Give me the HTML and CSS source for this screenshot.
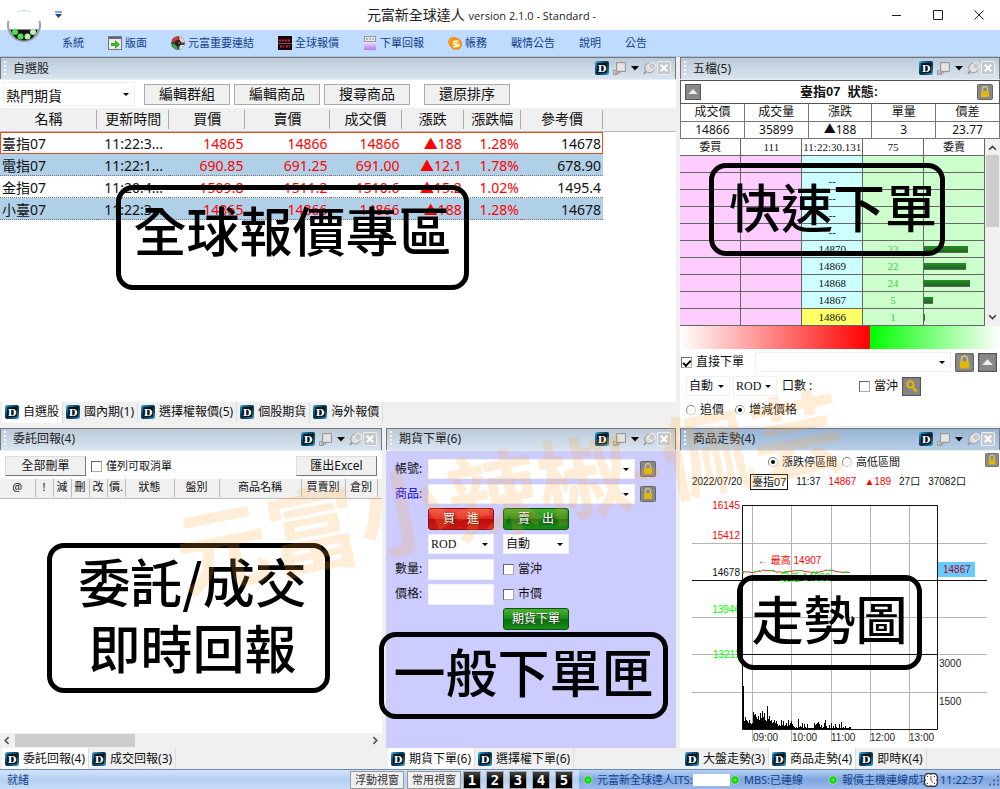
FILE: index.html
```html
<!DOCTYPE html>
<html lang="zh-Hant">
<head>
<meta charset="utf-8">
<meta name="viewport" content="width=device-width, initial-scale=1">
<title>元富新全球達人</title>
<link rel="stylesheet" href="styles.css">
</head>
<body>
<svg class="defs" aria-hidden="true">
  <defs>
    <linearGradient id="gD" x1="0" y1="0" x2="1" y2="1"><stop offset="0" stop-color="#3fb4e0"/><stop offset=".3" stop-color="#0a5a80"/><stop offset=".5" stop-color="#04304a"/><stop offset=".75" stop-color="#0a5a80"/><stop offset="1" stop-color="#3fb4e0"/></linearGradient>
    <linearGradient id="gPurple" x1="0" y1="0" x2="0" y2="1"><stop offset="0" stop-color="#efe0ff"/><stop offset="1" stop-color="#b878ee"/></linearGradient>
    <radialGradient id="gCoin"><stop offset="0" stop-color="#ffd84a"/><stop offset="1" stop-color="#f08c10"/></radialGradient>
    <radialGradient id="gLed"><stop offset="0" stop-color="#6f6"/><stop offset=".6" stop-color="#0c0"/><stop offset="1" stop-color="#bcd8b8"/></radialGradient>
    <symbol id="d" viewBox="0 0 14 14"><rect width="14" height="14" rx="2" fill="url(#gD)"/><rect x="2" y="2" width="10" height="10" rx="1" fill="#06141e"/><text x="7" y="11" text-anchor="middle" font-family="DejaVu Serif, serif" font-weight="bold" font-size="10" fill="#fff">D</text></symbol>
    <symbol id="float" viewBox="0 0 15 15"><path d="M1.500 9.500h4v4h-4z" fill="#ccc" stroke="#999"/><path d="M4.500 1.500h9v9h-9z" fill="#d8d8d8" stroke="#999"/><path d="M6 3h6v6H6z" fill="#e4e4e4"/><path d="M3 12h5v-1" fill="none" stroke="#999"/></symbol>
    <symbol id="pin" viewBox="0 0 14 14"><path d="M1 13l3-4" stroke="#999" stroke-width="2"/><circle cx="6.500" cy="7" r="4.800" fill="#ddd" stroke="#999"/><circle cx="9" cy="5" r="3.500" fill="#c8c8c8" stroke="#f4f4f4"/></symbol>
    <symbol id="close" viewBox="0 0 13 13"><rect x=".5" y=".5" width="12" height="12" rx="1" fill="#c4c8cc" stroke="#eee"/><path d="M3.500 3.500l6 6m0-6l-6 6" stroke="#fff" stroke-width="2"/></symbol>
    <symbol id="lock" viewBox="0 0 16 16"><rect x=".5" y=".5" width="15" height="15" rx="1" fill="#888" stroke="#666"/><path d="M5.500 8V5a2.500 2.500 0 0 1 5 0v3" fill="none" stroke="#d8c488" stroke-width="1.300"/><rect x="4" y="7" width="8" height="6" rx="1" fill="#e0b80c"/></symbol>
    <symbol id="up" viewBox="0 0 16 16"><rect x=".5" y=".5" width="15" height="15" fill="#888" stroke="#555"/><path d="M3.500 10l4.500-5 4.500 5z" fill="#eee"/></symbol>
    <symbol id="key" viewBox="0 0 18 18"><rect x=".5" y=".5" width="17" height="17" fill="#858585" stroke="#555"/><circle cx="8" cy="7" r="3" fill="none" stroke="#e2b30f" stroke-width="2"/><path d="M10 9l4 5m-2-2l-1.500 1" stroke="#e2b30f" stroke-width="2"/></symbol>
    <symbol id="led" viewBox="0 0 10 10"><circle cx="5" cy="5" r="4.500" fill="url(#gLed)"/></symbol>
    <symbol id="tools" viewBox="0 0 76 15">
      <use href="#d" x="0" y="0" width="14" height="14"/>
      <use href="#float" x="17" y="0" width="15" height="15"/>
      <path d="M36 5h8l-4 4.500z" fill="#000"/>
      <use href="#pin" x="48" y="0" width="14" height="14"/>
      <use href="#close" x="62" y="0" width="14" height="14"/>
    </symbol>
  </defs>
</svg>

<div class="app">
  <header class="titlebar">
    <svg class="quick" viewBox="0 0 8 8"><path d="M0 1h7" stroke="#15428b"/><path d="M0 3h7L3.500 7z" fill="#15428b"/></svg>
    <h1 class="title">元富新全球達人 <span class="version">version 2.1.0 - Standard -</span></h1>
    <div class="winbtns">
      <button class="winbtn"><svg viewBox="0 0 10 10"><path d="M0 5.500h9" stroke="#222"/></svg></button>
      <button class="winbtn"><svg viewBox="0 0 10 10"><path d="M.5.5h9v9h-9z" fill="none" stroke="#222"/></svg></button>
      <button class="winbtn"><svg viewBox="0 0 10 10"><path d="M.5.5l9 9m0-9l-9 9" stroke="#222"/></svg></button>
    </div>
  </header>
  <svg class="logo" viewBox="0 0 36 36">
    <path d="M11 3q7-3 14 0" fill="none" stroke="#a8b4c0"/>
    <circle cx="18" cy="17" r="15.500" fill="#fff"/>
    <path d="M2.500 12a16 16 0 1 0 31 0" fill="none" stroke="#98a0aa" stroke-width="2"/>
    <path d="M4 20.500h28q-4 11-14 11T4 20.500z" fill="#101510"/>
    <g fill="#4fdc4f"><circle cx="9" cy="23" r="3"/><circle cx="14.500" cy="27.500" r="3"/></g><g fill="#b8f0b0"><circle cx="21.500" cy="27.500" r="3"/><circle cx="27" cy="23" r="3"/></g>
  </svg>

  <nav class="menubar">
    <a class="menu" href="#">系統</a>
    <a class="menu" href="#"><svg class="micon" viewBox="0 0 14 14"><rect x=".5" y=".5" width="13" height="13" fill="#e9efe6" stroke="#777"/><path d="M1 2h12" stroke="#667" stroke-width="2"/><path d="M3 7h4V4l5 4.500L7 13v-3H3z" fill="#3fae2c"/></svg>版面</a>
    <a class="menu" href="#"><svg class="micon" viewBox="0 0 14 14"><circle cx="7" cy="7" r="6.800" fill="#444"/><path d="M1 6a6.500 6.500 0 0 1 6-5.500V5z" fill="#d33"/><path d="M8 .8a6 6 0 0 1 5.500 5.700H9z" fill="#e8c8c8"/><path d="M1 8l4 1 2 4.500Q2 13 1 8z" fill="#2eb82e"/><path d="M9 9l4.500 0Q12 13 8 13.500z" fill="#ddd"/><circle cx="7" cy="7" r="3" fill="#222"/><circle cx="8" cy="7" r="1" fill="#d44"/></svg>元富重要連結</a>
    <a class="menu" href="#"><svg class="micon" viewBox="0 0 14 14"><rect width="14" height="14" fill="#180606"/><path d="M1 4.500h12M2 10.500h4m2 0h4" stroke="#d8203c" stroke-width="2" stroke-dasharray="2 1"/><path d="M0 7.500h14" stroke="#666"/></svg>全球報價</a>
    <a class="menu" href="#"><svg class="micon" viewBox="0 0 14 14"><rect x="1.500" y=".5" width="11" height="5" fill="#e8e8e8" stroke="#999"/><path d="M3 3h8" stroke="#888" stroke-dasharray="2 1"/><rect x="1" y="6" width="12" height="8" fill="url(#gPurple)"/></svg>下單回報</a>
    <a class="menu" href="#"><svg class="micon" viewBox="0 0 14 14"><circle cx="5.500" cy="6" r="5.300" fill="url(#gCoin)"/><circle cx="8" cy="8" r="5.800" fill="url(#gCoin)" stroke="#e08a10" stroke-width=".6"/><path d="M10.500 5.500Q6 4 6 6.500T10 9t-4.500 2" fill="none" stroke="#fff8d8" stroke-width="1.500"/></svg>帳務</a>
    <a class="menu" href="#">戰情公告</a>
    <a class="menu" href="#">說明</a>
    <a class="menu" href="#">公告</a>
  </nav>

  <main class="workspace">
    <section class="panel quotes">
      <header class="phead"><h2 class="ptitle">自選股</h2><svg class="ptools" viewBox="0 0 76 15"><use href="#tools" width="76" height="15"/></svg></header>
      <div class="pbody">
        <div class="qbar">
          <span class="combo big"><select aria-label="群組"><option>熱門期貨</option></select></span>
          <div class="qbtns"><button class="qbtn">編輯群組</button><button class="qbtn">編輯商品</button><button class="qbtn">搜尋商品</button></div>
          <button class="qbtn">還原排序</button>
        </div>
        <div class="qwrap">
        <table class="qtable">
          <colgroup><col class="w97"><col class="w72"><col class="w76"><col class="w84"><col class="w72"><col class="w62"><col class="w57"><col class="w82"></colgroup>
          <thead><tr><th>名稱</th><th>更新時間</th><th>買價</th><th>賣價</th><th>成交價</th><th>漲跌</th><th>漲跌幅</th><th>參考價</th></tr></thead>
          <tbody>
            <tr class="sel"><td>臺指07</td><td>11:22:3...</td><td>14865</td><td>14866</td><td>14866</td><td>▲188</td><td>1.28%</td><td>14678</td></tr>
            <tr class="alt"><td>電指07</td><td>11:22:1...</td><td>690.85</td><td>691.25</td><td>691.00</td><td>▲12.1</td><td>1.78%</td><td>678.90</td></tr>
            <tr><td>金指07</td><td>11:20:4...</td><td>1509.8</td><td>1511.2</td><td>1510.6</td><td>▲15.2</td><td>1.02%</td><td>1495.4</td></tr>
            <tr class="alt"><td>小臺07</td><td>11:22:3...</td><td>14865</td><td>14866</td><td>14866</td><td>▲188</td><td>1.28%</td><td>14678</td></tr>
          </tbody>
        </table>
        </div>
      </div>
      <nav class="tabs">
        <button class="tab on"><svg class="dico"><use href="#d"/></svg>自選股</button>
        <button class="tab"><svg class="dico"><use href="#d"/></svg>國內期(1)</button>
        <button class="tab"><svg class="dico"><use href="#d"/></svg>選擇權報價(5)</button>
        <button class="tab"><svg class="dico"><use href="#d"/></svg>個股期貨</button>
        <button class="tab"><svg class="dico"><use href="#d"/></svg>海外報價</button>
      </nav>
      <div class="callout c-quotes">全球報價專區</div>
    </section>

    <section class="panel depth">
      <header class="phead"><h2 class="ptitle">五檔(5)</h2><svg class="ptools" viewBox="0 0 76 15"><use href="#tools" width="76" height="15"/></svg></header>
      <div class="pbody">
        <div class="dtitle"><svg class="i16"><use href="#up"/></svg><strong>臺指07&nbsp; 狀態:</strong><svg class="i16"><use href="#lock"/></svg></div>
        <table class="dsum">
          <tr><th>成交價</th><th>成交量</th><th>漲跌</th><th>單量</th><th>價差</th></tr>
          <tr><td>14866</td><td>35899</td><td>▲188</td><td>3</td><td>23.77</td></tr>
        </table>
        <div class="dladder">
          <table class="ladder">
            <thead><tr><th>委買</th><th>111</th><th>11:22:30.131</th><th>75</th><th>委賣</th></tr></thead>
            <tbody>
              <tr><td></td><td></td><td></td><td></td><td></td></tr>
              <tr><td></td><td></td><td>--</td><td></td><td></td></tr>
              <tr><td></td><td></td><td>--</td><td></td><td></td></tr>
              <tr><td></td><td></td><td>--</td><td></td><td></td></tr>
              <tr><td></td><td></td><td>--</td><td></td><td></td></tr>
              <tr><td></td><td></td><td>14870</td><td>23</td><td><div class="vol" style="width:73%"></div></td></tr>
              <tr><td></td><td></td><td>14869</td><td>22</td><td><div class="vol" style="width:70%"></div></td></tr>
              <tr><td></td><td></td><td>14868</td><td>24</td><td><div class="vol" style="width:77%"></div></td></tr>
              <tr><td></td><td></td><td>14867</td><td>5</td><td><div class="vol" style="width:15%"></div></td></tr>
              <tr class="last"><td></td><td></td><td>14866</td><td>1</td><td><div class="vol" style="width:2%"></div></td></tr>
            </tbody>
          </table>
          <div class="vscroll"><svg class="arrow" viewBox="0 0 8 8"><path d="M1 6l3-3 3 3" fill="none" stroke="#444" stroke-width="1.500"/></svg><div class="vthumb"></div><svg class="arrow" viewBox="0 0 8 8"><path d="M1 2l3 3 3-3" fill="none" stroke="#444" stroke-width="1.500"/></svg></div>
        </div>
        <div class="ratio"><div class="buy"></div><div class="sell"></div></div>
        <div class="dform">
          <div class="drow"><label class="chk"><input type="checkbox" checked>直接下單</label><span class="combo grow"><select aria-label="帳號"><option></option></select></span><svg class="i18"><use href="#lock"/></svg><svg class="i18"><use href="#up"/></svg></div>
          <div class="drow in"><span class="combo w44"><select aria-label="倉別"><option>自動</option></select></span><span class="combo w44 serif"><select aria-label="條件"><option>ROD</option></select></span><span class="lots">口數 :</span><label class="chk"><input type="checkbox">當沖</label><svg class="i18"><use href="#key"/></svg></div>
          <div class="drow in"><label class="chk"><input type="radio" name="px">追價</label><label class="chk"><input type="radio" name="px" checked>增減價格</label></div>
        </div>
      </div>
      <div class="callout c-depth">快速下單</div>
    </section>

    <section class="panel orders">
      <header class="phead"><h2 class="ptitle">委託回報(4)</h2><svg class="ptools" viewBox="0 0 76 15"><use href="#tools" width="76" height="15"/></svg></header>
      <div class="pbody">
        <div class="obar"><button class="obtn">全部刪單</button><label class="chk"><input type="checkbox">僅列可取消單</label><button class="obtn end">匯出Excel</button></div>
        <div class="owrap">
        <table class="otable"><colgroup><col class="w35"><col class="w18"><col class="w18"><col class="w18"><col class="w18"><col class="w18"><col class="w49"><col class="w45"><col class="w82"><col class="w44"><col class="w32"></colgroup>
          <tr><th>@</th><th>!</th><th>減</th><th>刪</th><th>改</th><th>價.</th><th>狀態</th><th>盤別</th><th>商品名稱</th><th>買賣別</th><th>倉別</th></tr></table>
        </div>
        <div class="hscroll"><svg class="arrow" viewBox="0 0 8 8"><path d="M5 1L2 4l3 3" fill="none" stroke="#555" stroke-width="1.500"/></svg><div class="hthumb"></div><svg class="arrow" viewBox="0 0 8 8"><path d="M3 1l3 3-3 3" fill="none" stroke="#555" stroke-width="1.500"/></svg></div>
      </div>
      <nav class="tabs"><button class="tab on"><svg class="dico"><use href="#d"/></svg>委託回報(4)</button><button class="tab"><svg class="dico"><use href="#d"/></svg>成交回報(3)</button></nav>
      <div class="callout c-orders">委託/成交<br>即時回報</div>
    </section>

    <section class="panel ticket">
      <header class="phead"><h2 class="ptitle">期貨下單(6)</h2><svg class="ptools" viewBox="0 0 76 15"><use href="#tools" width="76" height="15"/></svg></header>
      <div class="pbody">
        <form class="tform">
          <label class="name" for="acct">帳號:</label><div class="wide"><span class="combo grow"><select id="acct"><option></option></select></span><svg class="i16"><use href="#lock"/></svg></div>
          <label class="name blue" for="prod">商品:</label><div class="wide"><span class="combo grow"><select id="prod"><option></option></select></span><svg class="i16"><use href="#lock"/></svg></div>
          <button type="button" class="act buybtn c2">買&emsp;進</button><button type="button" class="act sellbtn c3">賣&emsp;出</button>
          <span class="combo c2 serif"><select aria-label="條件"><option>ROD</option></select></span><span class="combo c3"><select aria-label="倉別"><option>自動</option></select></span>
          <label class="name" for="qty">數量:</label><input id="qty" class="txt" type="text"><label class="chk"><input type="checkbox">當沖</label>
          <label class="name" for="price">價格:</label><input id="price" class="txt" type="text"><label class="chk"><input type="checkbox">市價</label>
          <button type="button" class="act sellbtn c3">期貨下單</button>
        </form>
      </div>
      <nav class="tabs"><button class="tab on"><svg class="dico"><use href="#d"/></svg>期貨下單(6)</button><button class="tab"><svg class="dico"><use href="#d"/></svg>選擇權下單(6)</button></nav>
      <div class="callout c-ticket">一般下單匣</div>
    </section>

    <section class="panel trend">
      <header class="phead deep"><h2 class="ptitle">商品走勢(4)</h2><svg class="ptools" viewBox="0 0 76 15"><use href="#tools" width="76" height="15"/></svg></header>
      <div class="pbody">
        <div class="trow"><label class="chk"><input type="radio" name="rg" checked>漲跌停區間</label><label class="chk"><input type="radio" name="rg">高低區間</label><svg class="i14"><use href="#lock"/></svg></div>
        <div class="tinfo"><span>2022/07/20</span><span class="sym">臺指07</span><span>11:37</span><span class="red">14867</span><span class="red">▲189</span><span>27口</span><span>37082口</span></div>
        <svg class="chart" viewBox="680 491 320 255">
          <g stroke="#b4b4b4"><path d="M692 543.500h295M692 617.500h295M692 654.500h295M692 692.500h295"/><path d="M752.500 505v237M791.500 505v237M831.500 505v237M870.500 505v237M909.500 505v237"/></g>
          <path d="M742.500 505.500h195v224h-195zM692 580.500h295M742 654.500h196" fill="none" stroke="#111"/>
          <path id="volume-bars" stroke="#000"/>
          <path id="line-up" fill="none" stroke="#e33"/><path id="line-down" fill="none" stroke="#2c2" stroke-dasharray="7 9"/>
          <g text-anchor="end" fill="#f00"><text x="740" y="509">16145</text><text x="740" y="539">15412</text><text x="740" y="576" fill="#111">14678</text><text x="740" y="613" fill="#0f0">13946</text><text x="740" y="658" fill="#0f0">13211</text></g>
          <text x="758" y="564" fill="#f00">← 最高 14907</text><text x="767" y="581" fill="#0d0">← 最低 14838</text>
          <rect x="938" y="562" width="37" height="15" fill="#6cf"/><text x="943" y="573" fill="#b00018">14867</text>
          <g fill="#222"><text x="939" y="667">3000</text><text x="939" y="705">1500</text><text x="753" y="741">09:00</text><text x="792" y="741">10:00</text><text x="831" y="741">11:00</text><text x="870" y="741">12:00</text><text x="909" y="741">13:00</text></g>
        </svg>
      </div>
      <nav class="tabs"><button class="tab"><svg class="dico"><use href="#d"/></svg>大盤走勢(3)</button><button class="tab on"><svg class="dico"><use href="#d"/></svg>商品走勢(4)</button><button class="tab"><svg class="dico"><use href="#d"/></svg>即時K(4)</button></nav>
      <div class="callout c-trend">走勢圖</div>
    </section>
  </main>

  <footer class="status">
    <span class="ready">就緒</span>
    <div class="sbtns"><button class="sbtn">浮動視窗</button><button class="sbtn">常用視窗</button></div>
    <div class="nums"><button class="num">1</button><button class="num">2</button><button class="num">3</button><button class="num">4</button><button class="num">5</button></div>
    <div class="links">
      <span class="link its"><svg class="led"><use href="#led"/></svg>元富新全球達人ITS:<i class="blank"></i></span>
      <span class="link mbs"><svg class="led"><use href="#led"/></svg>MBS:已連線</span>
      <span class="link host"><svg class="led"><use href="#led"/></svg>報價主機連線成功</span>
      <span class="clock"><svg class="i14" viewBox="0 0 14 14"><rect x=".5" y=".5" width="13" height="13" rx="4" fill="#fff" stroke="#333" stroke-width="1.500"/><path d="M7 3v4l2 3" fill="none" stroke="#d33"/><path d="M7 1v1M7 12v1M1 7h1M12 7h1M3 3l1 1M11 3l-1 1M3 11l1-1M11 11l-1-1" stroke="#333"/></svg>11:22:37</span>
      <svg class="grip" viewBox="0 0 12 12"><path d="M1 10.500h2m2 0h2m2 0h2M5 6.500h2m2 0h2M9 2.500h2" stroke="#4a6a9a" stroke-width="2"/></svg>
    </div>
  </footer>
  <div class="watermark" aria-hidden="true">元富小辣椒-佩芸</div>
</div>
<script src="chart.js"></script>
</body>
</html>
```

FILE: styles.css
```css
* { box-sizing: border-box; }
body { margin: 0; background: #f0f0f0; color: #111; font: 12px/16px "Noto Sans", "Noto Sans CJK TC", sans-serif; }
button, input, select { font: inherit; color: inherit; margin: 0; padding: 0; }
button { white-space: nowrap; }
svg { flex: none; }
.defs { position: absolute; width: 0; height: 0; }
.app { position: relative; display: flex; flex-direction: column; min-height: 100vh; overflow: hidden; }

.titlebar { display: flex; align-items: center; height: 30px; background: #fff; padding: 0 14px 0 55px; }
.quick { width: 8px; height: 8px; }
.title { flex: 1; margin: 0; text-align: center; font-size: 14px; font-weight: 400; line-height: 20px; color: #222; padding-left: 10px; }
.version { font-size: 11px; font-family: "Open Sans", sans-serif; }
.winbtns { display: flex; gap: 27px; }
.winbtn { display: grid; place-items: center; width: 14px; height: 14px; border: 0; background: none; }
.winbtn svg { width: 10px; height: 10px; }
.logo { position: absolute; left: 6px; top: 9px; width: 36px; height: 36px; }
.menubar { display: flex; align-items: center; gap: 24px; height: 27px; padding-left: 62px; background: #bfdbff; border-bottom: 1px solid #a8c0e0; }
.menu { display: flex; align-items: center; gap: 3px; font-size: 11px; color: #15428b; text-decoration: none; white-space: nowrap; }
.micon { width: 14px; height: 14px; }

.workspace { flex: 1; display: grid; grid-template-columns: 382fr 290fr 320fr; grid-template-rows: 368fr 341fr; column-gap: 4px; row-gap: 2px; }
.panel { position: relative; display: flex; flex-direction: column; min-width: 0; }
.quotes { grid-column: 1 / 3; }
.pbody { flex: 1; display: flex; flex-direction: column; background: #fff; border-top: 1px solid #e8edf2; min-width: 0; }
.phead { display: flex; align-items: center; justify-content: space-between; height: 22px; padding: 0 4px 0 12px; border: 1px solid #777; border-bottom: 0; background: linear-gradient(#bccad8, #d8e4f0); }
.phead.deep { background: linear-gradient(#98b4d4, #b8cfe8); }
.ptitle { margin: 0; font-size: 12px; line-height: 16px; font-weight: 400; color: #222; }
.phead::before { content: ""; position: absolute; left: 4px; width: 2px; height: 16px; background: repeating-linear-gradient(#f4f8fc 0 2px, transparent 2px 4px); }
.ptools { width: 76px; height: 15px; }

.tabs { display: flex; height: 21px; padding: 0 2px; background: #f0f0f0; }
.quotes .tabs { height: 24px; padding-bottom: 3px; }
.tab { display: flex; align-items: center; gap: 4px; padding: 0 3px; border: 0; border-right: 1px solid #ddd; background: none; }
.tab.on { background: #fff; }
.dico { width: 14px; height: 14px; }
.i14 { width: 14px; height: 14px; }
.i16 { width: 16px; height: 16px; }
.i18 { width: 19px; height: 19px; }

.combo { position: relative; display: flex; background: #fff; border: 1px solid #f0f0f0; height: 20px; }
.combo select { appearance: none; flex: 1; width: 100%; border: 0; background: none; padding: 0 12px 0 2px; }
.combo::after { content: ""; position: absolute; right: 5px; top: 8px; border: 3px solid transparent; border-top-color: #000; border-bottom: 0; pointer-events: none; }
.combo.grow { flex: 1; }
.combo.serif { font-family: "Liberation Serif", serif; }
.w44 { width: 44px; }
.chk { display: flex; align-items: center; gap: 4px; white-space: nowrap; }
input[type="checkbox"] { appearance: none; flex: none; width: 11px; height: 11px; border: 1px solid #aaa; border-top-color: #666; border-left-color: #666; background: #fff; display: grid; place-items: center; }
input[type="checkbox"]:checked::before { content: ""; width: 6px; height: 3px; border: solid #000; border-width: 0 0 2px 2px; transform: rotate(-45deg); }
input[type="radio"] { appearance: none; flex: none; width: 10px; height: 10px; border: 1px solid #888; border-right-color: #ccc; border-bottom-color: #ccc; border-radius: 50%; background: #fff; display: grid; place-items: center; }
input[type="radio"]:checked::before { content: ""; width: 4px; height: 4px; border-radius: 50%; background: #000; }

/* quotes */
.qbar { display: flex; align-items: center; height: 28px; padding-left: 3px; gap: 14px; }
.combo.big { width: 132px; height: 24px; font-size: 14px; margin-right: -5px; }
.combo.big select { padding-top: 4px; }
.combo.big::after { top: 10px; }
.qbtns { display: flex; gap: 4px; }
.qbtn { width: 86px; height: 21px; border: 1px solid #aaa; background: #f0f0f0; font-size: 14px; line-height: 18px; }
.qwrap { flex: 1; background: linear-gradient(#f0f0f0 23px, #bbb 23px, #bbb 24px, #fff 24px); }
.qtable { border-collapse: separate; border-spacing: 0; table-layout: fixed; width: 603px; font-size: 14px; line-height: 19px; }
.qtable th { height: 24px; padding: 0 0 4px; font-weight: 400; background: linear-gradient(to left, #aaa 1px, transparent 1px); background-size: 100% 19px; background-repeat: no-repeat; background-position: 0 2px; }
.qtable td { height: 22px; padding: 1px 2px 0 0; color: #f00; text-align: right; border-bottom: 1px dotted #777; white-space: nowrap; }
.qtable td:nth-child(1) { color: #111; text-align: left; padding-left: 2px; }
.qtable td:nth-child(2) { color: #111; text-align: left; padding-left: 7px; }
.qtable td:nth-child(8) { color: #111; }
.qtable .alt td { background: #b0d0e8; }
.qtable .sel { outline: 1px solid #f04820; outline-offset: -1px; }
.qtable .sel td { border-bottom-color: transparent; }
.w97 { width: 97px; } .w72 { width: 72px; } .w76 { width: 76px; } .w84 { width: 84px; } .w62 { width: 62px; } .w57 { width: 57px; } .w82 { width: 82px; }
.w35 { width: 35px; } .w18 { width: 18px; } .w49 { width: 49px; } .w45 { width: 45px; } .w32 { width: 32px; }

/* depth */
.dtitle { display: flex; align-items: center; justify-content: space-between; height: 24px; padding: 0 6px 0 4px; border: 1px solid #555; }
.dtitle strong { font-family: "Liberation Sans", "Noto Sans CJK TC", sans-serif; font-size: 13px; }
.dsum, .ladder { border-collapse: collapse; table-layout: fixed; width: 100%; text-align: center; }
.dsum th, .dsum td { height: 17px; padding: 0; border: 1px solid #777; border-top: 0; font-weight: 400; line-height: 16px; }
.dladder { display: grid; grid-template-columns: 1fr 15px; }
.ladder { font: 11px/16px "Liberation Serif", "Noto Sans CJK TC", serif; }
.ladder th, .ladder td { height: 17px; padding: 0; border: 1px solid #666; border-top: 0; font-weight: 400; white-space: nowrap; }
.ladder th:first-child, .ladder td:first-child { border-left: 0; }
.ladder td:nth-child(-n+2) { background: #fcf; }
.ladder td:nth-child(3) { background: #cff; }
.ladder td:nth-child(n+4) { background: #cfc; color: #4c4; }
.ladder .last td:nth-child(3) { background: #ff6; }
.vol { height: 7px; background: linear-gradient(#2a8a2a, #1a6a1a); border: solid #666; border-width: 0 0 1px; }
.vscroll { display: flex; flex-direction: column; align-items: center; padding: 4px 0; background: #f0f0f0; }
.vthumb { width: 13px; height: 72px; margin: 3px 0 auto; background: #cdcdcd; }
.arrow { width: 9px; height: 9px; }
.ratio { display: flex; height: 23px; }
.buy { flex: 190; background: linear-gradient(to right, #fff, red); }
.sell { flex: 130; background: linear-gradient(to right, #0f0, #fff); }
.dform { display: flex; flex-direction: column; gap: 4px; padding: 3px 3px 0 1px; }
.drow { display: flex; align-items: center; gap: 3px; height: 20px; }
.drow .grow { margin-left: 8px; }
.drow.in { padding-left: 5px; }
.drow.in .chk + .chk { margin-left: 8px; }
.lots { flex: 0 0 76px; padding-left: 2px; }
.drow .i18 { margin-left: 1px; }

/* orders */
.obar { display: flex; align-items: center; gap: 5px; height: 28px; padding: 3px 5px 0; }
.obtn { width: 81px; height: 20px; border: 1px solid #ddd; border-right-color: #777; border-bottom-color: #777; background: #f0f0f0; line-height: 16px; }
.obtn.end { margin-left: auto; }
.obar .chk { font-size: 11px; }
.owrap { flex: 1; background: linear-gradient(#f0f0f0 19px, #bbb 19px, #bbb 20px, #fff 20px); }
.otable { border-collapse: collapse; table-layout: fixed; width: 377px; font-size: 11px; line-height: 14px; }
.otable th { height: 18px; padding: 0 0 2px; font-weight: 400; border-right: 1px solid #bbb; white-space: nowrap; }
.hscroll { display: flex; align-items: center; height: 15px; padding: 0 3px; background: #f0f0f0; }
.hthumb { width: 120px; height: 13px; margin: 0 auto 0 3px; background: #cdcdcd; }

/* ticket */
.ticket .pbody { background: #ccf; }
.tform { display: grid; grid-template-columns: 24px 66px 66px 1fr; grid-auto-rows: 25px; column-gap: 9px; align-items: center; padding: 6px 9px; }
.name { grid-column: 1; white-space: nowrap; }
.wide { grid-column: 2 / 5; display: flex; gap: 5px; align-items: center; width: 228px; }
.blue { color: #00f; }
.c2 { grid-column: 2; }
.c3 { grid-column: 3; }
.act { height: 22px; border-radius: 3px; color: #fff; text-shadow: 1px 1px 1px #333; }
.buybtn { border: 1px solid #8a1010; background: linear-gradient(#ee5048, #e02020 50%, #b80c0c 50%, #d01818); }
.sellbtn { border: 1px solid #0c500c; background: linear-gradient(#48b030, #1c8c14 50%, #0a6c0a 50%, #189018); }
.txt { width: 100%; height: 21px; border: 1px solid #f0f0f8; background: #fff; }

/* trend */
.trow { display: flex; align-items: center; justify-content: center; gap: 5px; height: 22px; position: relative; padding-right: 12px; }
.trow .chk { font-size: 11px; }
.trow .i14 { position: absolute; right: 1px; top: 2px; }
.tinfo { display: flex; align-items: center; gap: 8px; height: 18px; padding-left: 12px; font: 10px/14px "Liberation Sans", "Noto Sans CJK TC", sans-serif; white-space: nowrap; }
.sym { border: 1px solid #111; padding: 0 1px; font-size: 11px; }
.red { color: #f00; }
.chart { display: block; width: 100%; font: 10px "Liberation Sans", "Noto Sans CJK TC", sans-serif; }

/* status bar */
.status { display: flex; align-items: center; height: 20px; border-top: 1px solid #6888b8; background: linear-gradient(#d4e4fa, #b4cff4 50%, #c8dcf8); color: #15428b; font-size: 11px; white-space: nowrap; }
.ready { flex: 346; padding-left: 7px; }
.sbtns { display: flex; gap: 3px; padding: 0 1px; }
.sbtn { width: 54px; height: 18px; border: 1px solid #999; background: #f0f0f0; color: #333; }
.nums { display: flex; gap: 5px; padding: 0 6px 0 1px; }
.num { width: 18px; height: 18px; border: 1px solid #aaa; background: linear-gradient(#444, #000 60%); color: #fff; font: bold 14px/14px "DejaVu Sans Mono", monospace; }
.links { flex: 422; display: flex; align-items: center; align-self: stretch; padding-left: 4px; background: linear-gradient(#b8d0f4, #7ea6e0 50%, #9cbcec); }
.link { display: flex; align-items: center; gap: 4px; }
.its { flex: 0 0 147px; }
.led { width: 10px; height: 10px; }
.blank { flex: 1; height: 12px; background: #fff; margin-left: -4px; }
.mbs { flex: 0 0 98px; }
.host { flex: 0 0 96px; overflow: hidden; }
.clock { display: flex; align-items: center; gap: 2px; }
.grip { width: 12px; height: 12px; margin-left: auto; }

/* annotations over the panels */
.callout { position: absolute; display: grid; place-items: center; padding-bottom: 8px; border: 5px solid #000; border-radius: 17px; color: #000; font: 500 52px/66px "Noto Sans CJK TC", sans-serif; white-space: nowrap; text-align: center; pointer-events: none; }
.c-quotes { left: 116px; top: 128px; width: 353px; height: 105px; padding-bottom: 18px; font-size: 53px; }
.c-depth { left: 29px; top: 106px; width: 236px; height: 93px; padding-left: 12px; }
.c-orders { left: 47px; top: 115px; width: 283px; height: 150px; padding-left: 8px; }
.c-ticket { left: -7px; top: 204px; width: 289px; height: 87px; }
.c-trend { left: 57px; top: 147px; width: 185px; height: 95px; }
.watermark { position: absolute; left: 169px; top: 432px; width: 680px; text-align: center; font: 700 92px/110px "Noto Sans CJK TC", sans-serif; color: rgba(255, 165, 60, .2); white-space: nowrap; transform: rotate(-11deg); pointer-events: none; }
```

FILE: chart.js
```js
const volumes = [43, 8, 12, 9, 8, 6, 9, 6, 5, 6, 17, 14, 15, 12, 10, 13, 9, 16, 11, 18, 12, 16, 9, 8, 23, 10, 13, 8, 9, 6, 7, 9, 6, 8, 5, 3, 4, 3, 9, 4, 8, 3, 4, 6, 3, 9, 4, 6, 8, 5, 3, 2, 1, 2, 1, 10, 2, 3, 2, 6, 1, 5, 2, 1, 5, 1, 1, 1, 1, 1, 1, 6, 4, 5, 6, 7, 5, 2, 4, 1, 2, 6, 9, 3, 1, 1, 4, 1, 6, 1, 3, 1, 5, 2, 1, 1, 5, 1, 7, 1, 2, 1, 3, 1, 1, 1, 2, 2];
const left = 743;
const base = 729;

document.getElementById('volume-bars').setAttribute('d',
  volumes.map((v, i) => `M${left + i + 0.5} ${base}v${-v}`).join(''));

const line = 'M743 574V571' + volumes.map((v, i) =>
  `L${left + i} ${(571 + Math.sin(i / 5) + (v % 3) * 0.4).toFixed(1)}`).join('');
document.getElementById('line-up').setAttribute('d', line);
document.getElementById('line-down').setAttribute('d', line);
```
